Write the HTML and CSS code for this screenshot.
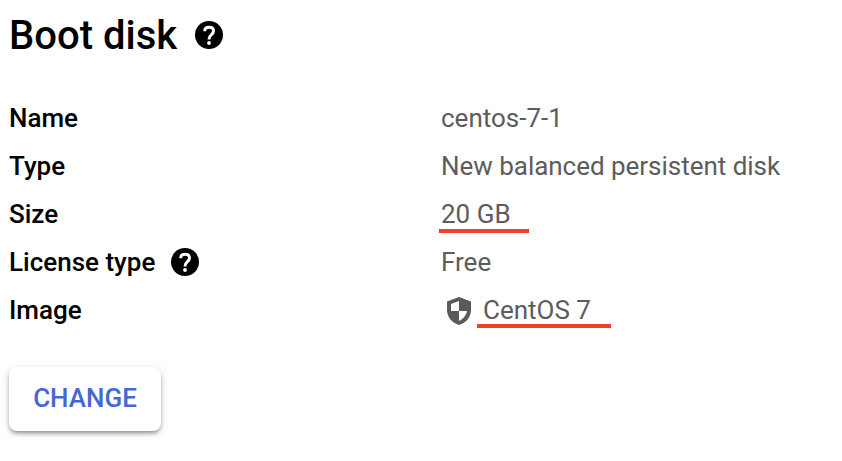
FILE: index.html
```html
<!DOCTYPE html>
<html lang="en">
<head>
<meta charset="utf-8">
<title>Boot disk</title>
<link rel="stylesheet" href="styles.css">
</head>
<body>
<main class="panel">
  <h1 class="title"><span>Boot disk</span>
    <svg class="help" viewBox="0 0 28 28" aria-hidden="true"><circle class="help-disc" cx="14" cy="14" r="14"/><path class="help-hook" d="M9.700 10.200C9.700 7.700 11.400 6.300 14.100 6.300c2.700 0 4.400 1.500 4.400 3.800 0 1.800-1 2.800-2.300 3.800-1.500 1.200-2.200 2.200-2.200 4.500"/><circle class="help-dot" cx="14" cy="22" r="1.900"/></svg>
  </h1>
  <dl class="details">
    <dt>Name</dt><dd>centos-7-1</dd>
    <dt>Type</dt><dd class="long">New balanced persistent disk</dd>
    <dt>Size</dt><dd><span class="marked size-mark">20 GB</span></dd>
    <dt><span>License type</span>
      <svg class="help" viewBox="0 0 28 28" aria-hidden="true"><circle class="help-disc" cx="14" cy="14" r="14"/><path class="help-hook" d="M9.700 10.200C9.700 7.700 11.400 6.300 14.100 6.300c2.700 0 4.400 1.500 4.400 3.800 0 1.800-1 2.800-2.300 3.800-1.500 1.200-2.200 2.200-2.200 4.500"/><circle class="help-dot" cx="14" cy="22" r="1.900"/></svg>
    </dt><dd>Free</dd>
    <dt>Image</dt><dd>
      <svg class="shield" viewBox="0 0 24 28" aria-hidden="true"><path class="shield-body" d="M12 0L0 4.500V13c0 7 5 13 12 15 7-2 12-8 12-15V4.500z"/><path class="shield-cut" d="M12 4v10H4V7zM12 14h8c-.7 4.500-4 8-8 10z"/></svg>
      <span class="marked image-mark">CentOS 7</span></dd>
  </dl>
  <button class="change" type="button">CHANGE</button>
</main>
</body>
</html>
```

FILE: styles.css
```css
* { box-sizing: border-box; }
body { margin: 0; background: #fff; font-family: Roboto, sans-serif; }
.panel { min-height: 461px; padding: 11px 9px 0; }
.title {
  display: flex; align-items: center; gap: 18px;
  height: 49px; margin: 0; color: #000;
  font-size: 40px; font-weight: 500; line-height: 49px;
}
.help { display: block; width: 28px; height: 28px; flex: none; }
.title .help { margin-bottom: 1px; }
.help-disc { fill: #000; }
.help-hook { fill: none; stroke: #fff; stroke-width: 3; }
.help-dot { fill: #fff; }
.details {
  display: grid; grid-template-columns: 432px 1fr; grid-auto-rows: 48px;
  margin: 34px 0 0; font-size: 26px; line-height: 48px;
}
.details dt, .details dd { display: flex; align-items: center; margin: 0; white-space: nowrap; }
.details dt { gap: 16px; color: #000; font-weight: 500; }
.details dd { color: #5c5c5c; }
.details .long { letter-spacing: -.03px; }
.shield { width: 24px; height: 28px; margin: 2px 12px 0 6px; }
.shield-body { fill: #5a5a5a; }
.shield-cut { fill: #fff; }
.marked { position: relative; }
.marked::after {
  content: ""; position: absolute; height: 4px;
  background: #ee4224;
}
.size-mark::after { left: -2px; top: 39px; width: 90px; }
.image-mark::after { left: -6px; top: 38px; width: 134px; }
.change {
  display: block; width: 152px; height: 64px; margin-top: 33px; padding: 0 0 2px;
  border: 0; border-radius: 8px; background: #fff; color: #4468d2;
  box-shadow: 0 3px 4px -1px rgba(0,0,0,.4), 0 2px 10px rgba(0,0,0,.13);
  font: 500 26px/62px Roboto, sans-serif;
}
```
